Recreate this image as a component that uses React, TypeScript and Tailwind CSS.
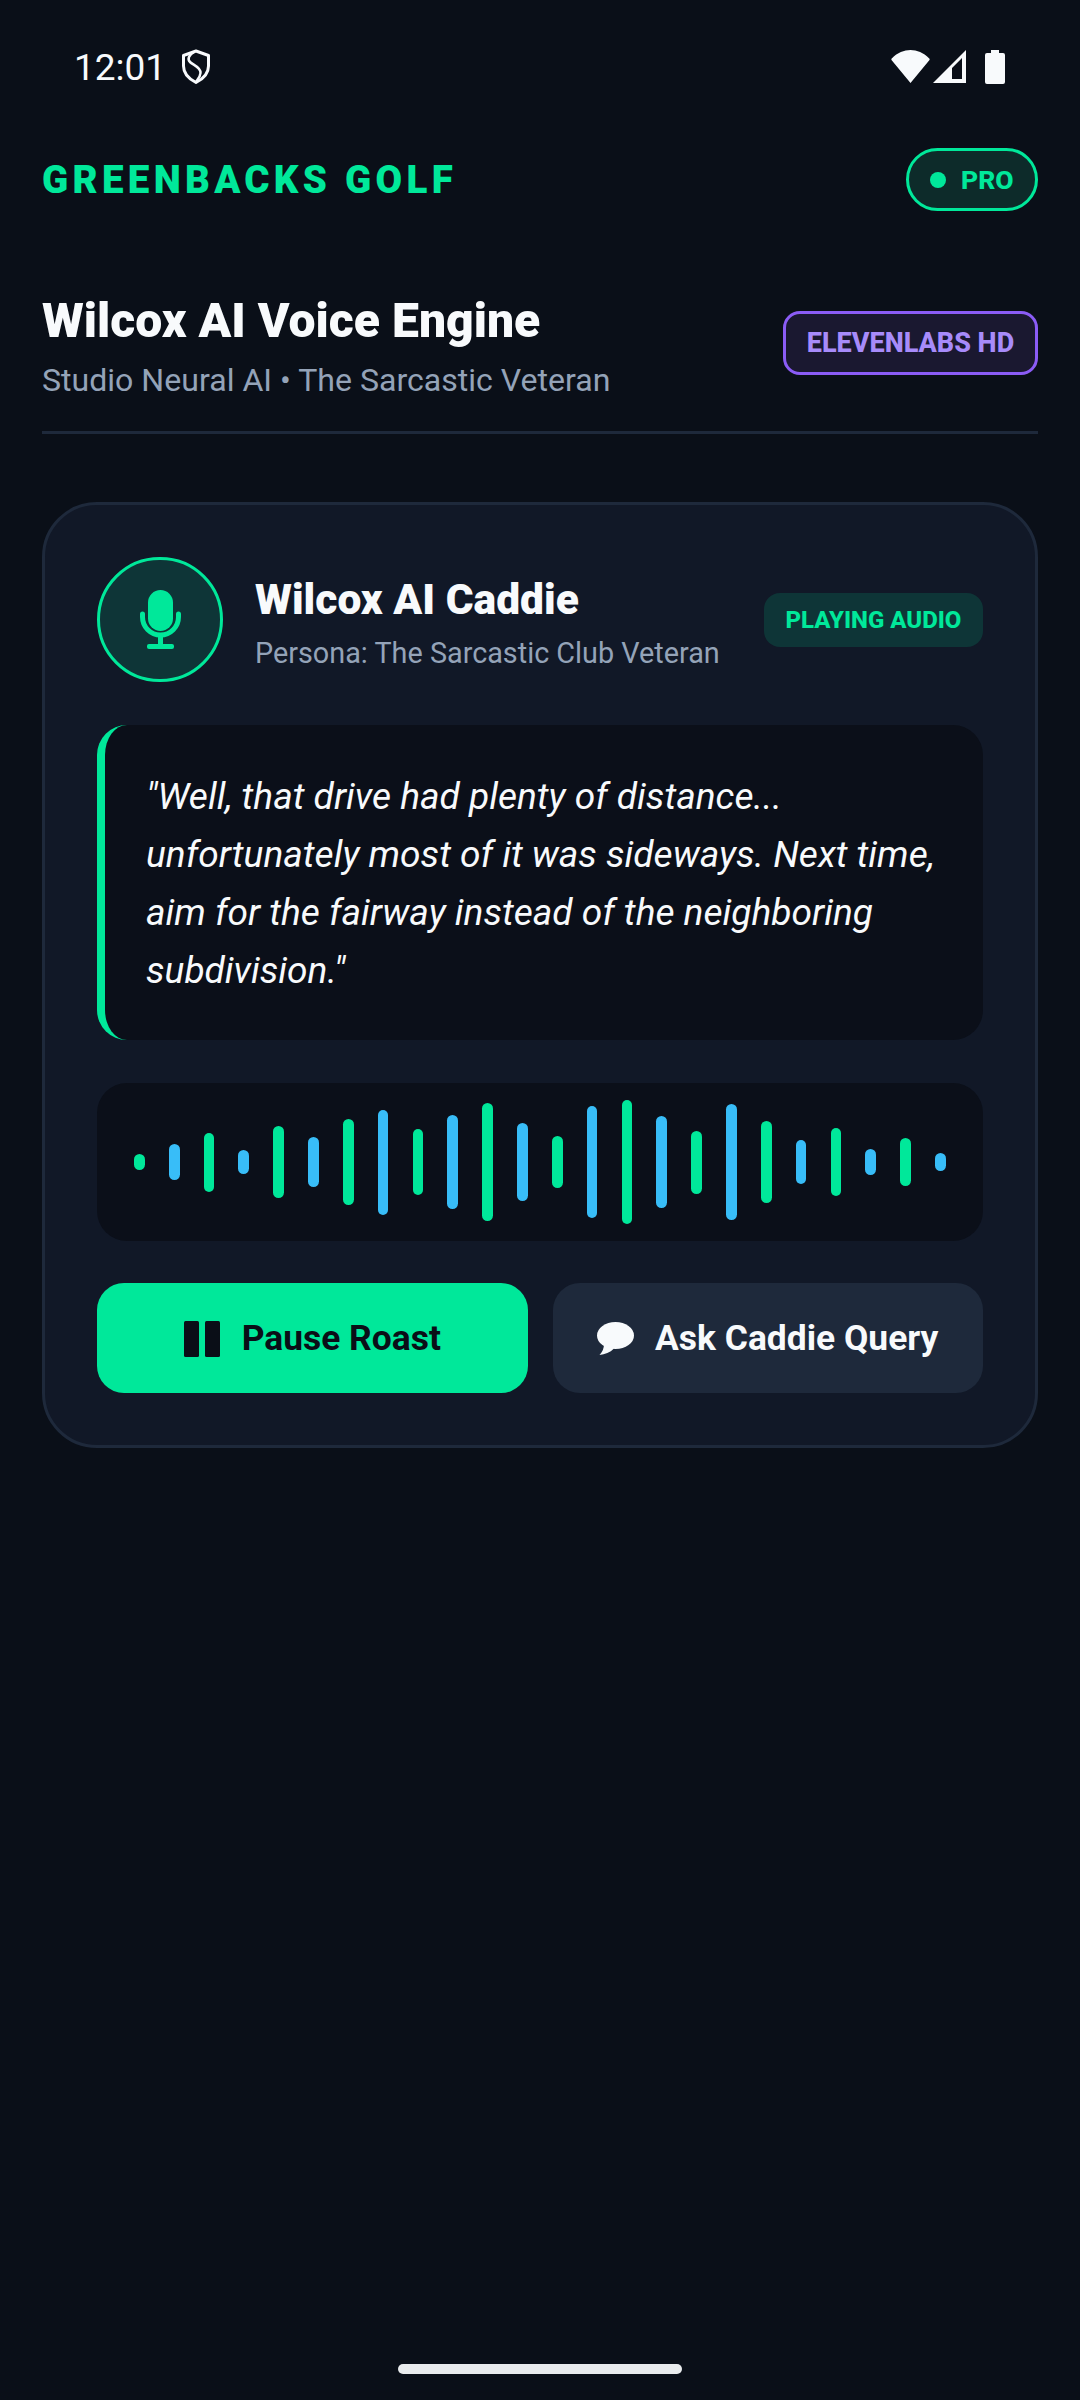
const waveBars = [16, 36, 59, 24, 72, 50, 86, 105, 66, 94, 118, 78, 52, 112, 124, 92, 63, 116, 82, 44, 68, 26, 48, 18];

function ShieldIcon() {
  return (
    <svg width="30" height="36" viewBox="0 0 30 36" fill="none" stroke="#f8fafc" strokeWidth="3" strokeLinejoin="round">
      <path d="M15 2 L27.5 6.5 V17 C27.5 24.5 22 30 15 33.5 C8 30 2.5 24.5 2.5 17 V6.5 Z" />
      <path d="M13 3 C8 6 6 10 9 13 C12 16 20 18 19.5 24 C19.3 28 16 31 15 33" strokeWidth="2.5" />
    </svg>
  );
}

function StatusIcons() {
  return (
    <div className="flex items-start">
      <svg width="39" height="33" viewBox="0 0 39 33" fill="#f8fafc">
        <path d="M19.5 33 L0.5 10 Q0 9 1 8.2 C12 -2.7 27 -2.7 38 8.2 Q39 9 38.5 10 Z" />
      </svg>
      <svg className="ml-[3px]" width="33" height="33" viewBox="0 0 33 33" fill="#f8fafc" fillRule="evenodd">
        <path d="M33 0 V33 H0 Z M29 8 L19 18 V29 H29 Z" />
      </svg>
      <svg className="ml-[19px]" width="20" height="34" viewBox="0 0 20 34" fill="#f8fafc">
        <path d="M6 0 H14 V3 H18 Q20 3 20 5 V32 Q20 34 18 34 H2 Q0 34 0 32 V5 Q0 3 2 3 H6 Z" />
      </svg>
    </div>
  );
}

function MicIcon() {
  return (
    <svg width="41" height="59" viewBox="0 0 41 59" fill="none">
      <rect x="8" y="0" width="25" height="41" rx="12.5" fill="#00e89a" />
      <path d="M2.5 24 V27 A18 18 0 0 0 38.5 27 V24" stroke="#00e89a" strokeWidth="5" strokeLinecap="round" />
      <path d="M20.5 46 V56" stroke="#00e89a" strokeWidth="5" />
      <rect x="7" y="54" width="27" height="5" rx="2" fill="#00e89a" />
    </svg>
  );
}

function PauseIcon() {
  return (
    <svg width="36" height="36" viewBox="0 0 36 36" fill="#0a0e17">
      <rect x="0" y="0" width="15" height="36" rx="1.5" />
      <rect x="21" y="0" width="15" height="36" rx="1.5" />
    </svg>
  );
}

function BubbleIcon() {
  return (
    <svg width="37" height="33" viewBox="0 0 37 33" fill="#f8fafc">
      <ellipse cx="18.5" cy="13.5" rx="18.5" ry="13.5" />
      <path d="M7 22 C7 26 5.5 30 2.5 33 C8 32.5 13 30.5 17 26.5 Z" />
    </svg>
  );
}

export default function App() {
  return (
    <div className="relative min-h-[2400px] bg-[#0a0f18] text-[#f8fafc] [font-family:Roboto,sans-serif]">
      {/* Status bar */}
      <div className="flex h-[134px] items-center justify-between pl-[74px] pr-[75px]">
        <div className="flex items-center gap-[15px]">
          <span className="text-[37px] leading-none">12:01</span>
          <ShieldIcon />
        </div>
        <StatusIcons />
      </div>

      <div className="px-[42px] pt-[14px]">
        {/* Brand row */}
        <div className="flex items-center justify-between">
          <div className="pt-[2px] text-[38.5px] font-black leading-none tracking-[4.3px] text-[#00e89a]">GREENBACKS GOLF</div>
          <div className="flex h-[63px] w-[132px] items-center gap-[15px] rounded-full border-[3px] border-[#00e89a] bg-[#0d2b2a] pl-[21px]">
            <span className="h-[16px] w-[16px] rounded-full bg-[#00e89a]" />
            <span className="text-[26.5px] font-extrabold text-[#00e89a]">PRO</span>
          </div>
        </div>

        {/* Heading */}
        <div className="mt-[82px] flex items-center justify-between border-b-[3px] border-[#1e293b] pb-[31.5px]">
          <div>
            <h1 className="text-[48.1px] font-black leading-[55px]">Wilcox AI Voice Engine</h1>
            <p className="mt-[11.5px] text-[32.1px] leading-[40px] text-[#94a3b8]">Studio Neural AI • The Sarcastic Veteran</p>
          </div>
          <div className="mb-[7px] flex h-[64px] w-[255px] items-center justify-center rounded-[17px] border-[3px] border-[#8b5cf6] bg-[#1a1830] text-[27px] font-extrabold text-[#a78bfa]">
            ELEVENLABS HD
          </div>
        </div>

        {/* Voice card */}
        <div className="mt-[68px] rounded-[55px] border-[3px] border-[#1e293b] bg-[#111827] px-[52px] pb-[52px] pt-[52px]">
          <div className="flex items-center">
            <div className="flex h-[125px] w-[126px] shrink-0 items-center justify-center rounded-full border-[3px] border-[#00e89a] bg-[#0e3537]">
              <MicIcon />
            </div>
            <div className="ml-[32px] min-w-0 flex-1 pt-[8px]">
              <div className="text-[42.5px] font-black leading-[48px]">Wilcox AI Caddie</div>
              <div className="mt-[11px] text-[28.8px] leading-[36px] text-[#94a3b8]">Persona: The Sarcastic Club Veteran</div>
            </div>
            <div className="flex h-[54px] w-[219px] shrink-0 items-center justify-center rounded-[16px] bg-[#0e3537] pt-[1px] text-[24px] font-extrabold text-[#00e89a]">
              PLAYING AUDIO
            </div>
          </div>

          {/* Quote */}
          <div className="mt-[43px] rounded-[30px] border-l-[8px] border-[#00e89a] bg-[#0b0f19] pb-[40px] pl-[41px] pr-[30px] pt-[43px] text-[37.1px] italic leading-[58px]">
            "Well, that drive had plenty of distance... unfortunately most of it was sideways. Next time, aim for the fairway instead of the neighboring subdivision."
          </div>

          {/* Waveform */}
          <div className="mt-[43px] flex h-[158px] items-center justify-between rounded-[30px] bg-[#0b0f19] px-[37px]">
            {waveBars.map((h, i) => (
              <div
                key={i}
                className={i % 2 === 0 ? "w-[10.7px] rounded-full bg-[#00e89a]" : "w-[10.7px] rounded-full bg-[#38bdf8]"}
                style={{ height: h }}
              />
            ))}
          </div>

          {/* Actions */}
          <div className="mt-[42px] grid grid-cols-2 gap-[25px]">
            <button className="flex h-[110px] items-center justify-center gap-[22px] rounded-[27px] bg-[#00e89a] pt-[1px] text-[35.4px] font-bold text-[#0a0e17]">
              <PauseIcon />
              Pause Roast
            </button>
            <button className="flex h-[110px] items-center justify-center gap-[21px] rounded-[27px] bg-[#1e293b] pt-[1px] text-[35.4px] font-bold text-[#f8fafc]">
              <BubbleIcon />
              Ask Caddie Query
            </button>
          </div>
        </div>
      </div>

      {/* Gesture pill */}
      <div className="absolute bottom-[26px] left-[398px] h-[10px] w-[284px] rounded-full bg-[#e9ebed]" />
    </div>
  );
}
